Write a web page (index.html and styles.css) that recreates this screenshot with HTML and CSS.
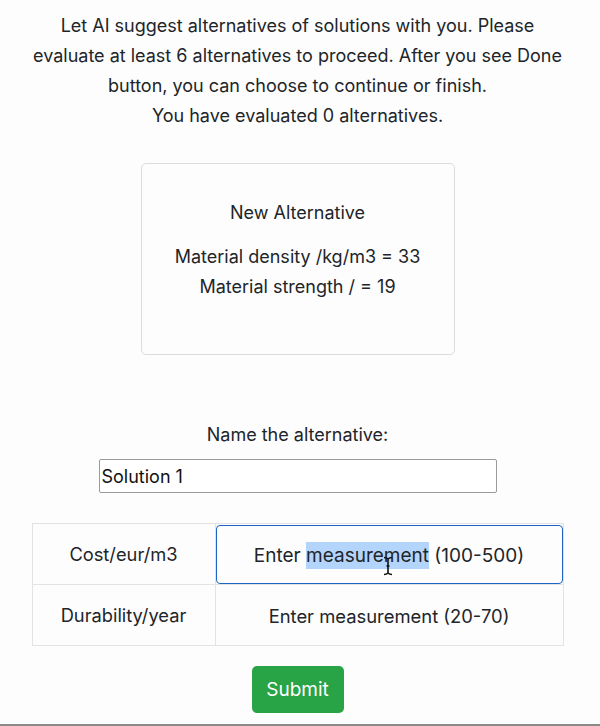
FILE: index.html
```html
<!DOCTYPE html>
<html>
<head>
<meta charset="utf-8">
<link rel="stylesheet" href="styles.css">
</head>
<body>
<main class="page">
  <p class="intro">Let AI suggest alternatives of solutions with you. Please<br>evaluate at least 6 alternatives to proceed. After you see Done<br>button, you can choose to continue or finish.<br>You have evaluated 0 alternatives.</p>

  <section class="card">
    <p class="card-title">New Alternative</p>
    <p class="card-line">Material density /kg/m3 = 33</p>
    <p class="card-line">Material strength / = 19</p>
  </section>

  <label class="name-label" for="altname">Name the alternative:</label>
  <div class="name-wrap"><input id="altname" class="name-input" type="text" value="Solution 1"></div>

  <table class="measures">
    <tr>
      <td class="crit">Cost/eur/m3</td>
      <td class="val-cell">
        <div class="val val-focus">Enter <span class="sel">measurement</span> (100-500)
          <svg class="ibeam" width="10" height="20" viewBox="0 0 10 20"><path d="M1 1.5c2 0 3 .5 4 1.5c1-1 2-1.5 4-1.5M5 3v14M1 18.5c2 0 3-.5 4-1.5c1 1 2 1.5 4 1.5M3.5 10h3" fill="none" stroke="#111" stroke-width="1.6"/></svg>
        </div>
      </td>
    </tr>
    <tr>
      <td class="crit">Durability/year</td>
      <td class="val-cell"><div class="val val-small">Enter measurement (20-70)</div></td>
    </tr>
  </table>

  <div class="actions"><button class="submit" type="button">Submit</button></div>
</main>
</body>
</html>
```
FILE: styles.css
```css
* { box-sizing: border-box; }
html, body { margin: 0; padding: 0; }
body {
  background: #fdfdfe;
  color: #212529;
  font-family: Inter, "Noto Sans", sans-serif;
  font-size: 18px;
  height: 726px;
  overflow: hidden;
  border-bottom: 2px solid #8a8a8a;
}
.page {
  display: flex;
  flex-direction: column;
  align-items: center;
  text-align: center;
  padding-top: 11px;
  padding-right: 5px;
}
.intro {
  margin: 0;
  line-height: 30px;
  white-space: nowrap;
}
.card {
  margin-top: 32px;
  width: 314px;
  height: 192px;
  border: 1px solid #dcdcdf;
  border-radius: 5px;
  padding-top: 37px;
}
.card p { margin: 0; line-height: 24px; }
.card-title { margin-bottom: 20px !important; }
.card-line + .card-line { margin-top: 6px !important; }
.name-label {
  margin-top: 68px;
  line-height: 24px;
}
.name-wrap { margin-top: 12px; }
.name-input {
  width: 398px;
  height: 34px;
  border: 1px solid #9a9a9a;
  border-radius: 2px;
  background: #fff;
  font-family: inherit;
  font-size: 18px;
  color: #111;
  padding: 0 2px;
}
.measures {
  margin-top: 30px;
  width: 532px;
  border-collapse: collapse;
}
.measures td {
  border: 1px solid #e3e3e6;
  height: 61px;
  padding: 0;
}
.crit { width: 183px; font-size: 18.3px; }
.val-cell { padding: 0; }
.val {
  height: 59px;
  line-height: 59px;
  position: relative;
  border: 1px solid transparent;
  border-radius: 4px;
  font-size: 19px;
}
.val-small { font-size: 18.4px; }
.val-focus { border-color: #1d64c4; }
.sel { background: #b4d5fb; padding: 2px 0; }
.ibeam { position: absolute; left: 166px; top: 30px; }
.actions { margin-top: 20px; }
.submit {
  width: 92px;
  height: 47px;
  border: none;
  border-radius: 5px;
  background: #28a345;
  color: #fff;
  font-family: inherit;
  font-size: 19px;
}
```
